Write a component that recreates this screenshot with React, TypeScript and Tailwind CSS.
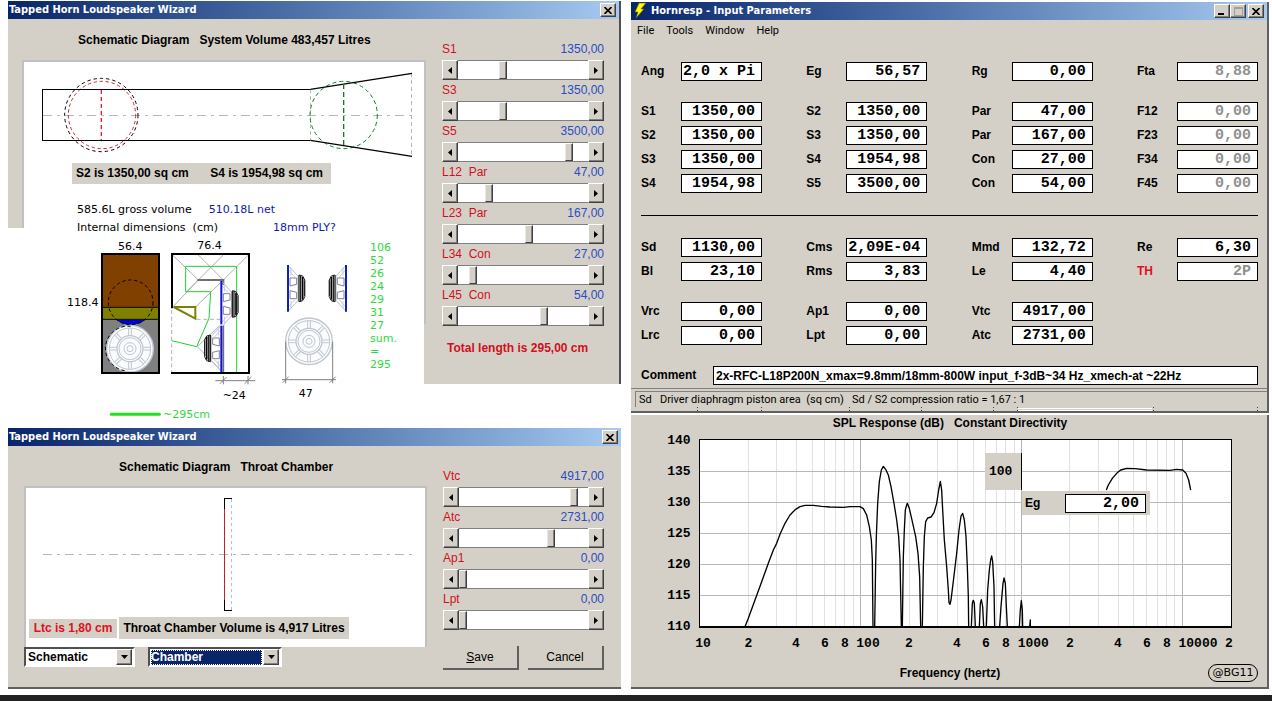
import React from "react";

const sans = "font-['Liberation_Sans',sans-serif]";
const boldText = "font-['Liberation_Sans',sans-serif] text-[12px] leading-[15px] font-bold";
const bevel =
  "bg-[#d4d0c8] border border-t-white border-l-white border-b-[#404040] border-r-[#404040] shadow-[inset_-1px_-1px_0_#808080]";

function CloseButton() {
  return (
    <button type="button" aria-label="Close" className={`flex h-[14px] w-[16px] items-center justify-center ${bevel}`}>
      <svg width="8" height="7" viewBox="0 0 8 7" stroke="#000" strokeWidth="1.6">
        <path d="M0.5 0L7.5 7M7.5 0L0.5 7" />
      </svg>
    </button>
  );
}

function TitleBar({ title, icon, children }: { title: string; icon?: React.ReactNode; children: React.ReactNode }) {
  return (
    <header className="flex h-[18px] items-center bg-gradient-to-r from-[#0a246a] to-[#a6caf0] pr-[3px]">
      {icon}
      <h1 className="flex-1 pl-px font-['DejaVu_Sans_Condensed','DejaVu_Sans',sans-serif] text-[11px] font-bold leading-[18px] text-white">
        {title}
      </h1>
      {children}
    </header>
  );
}

type SliderData = { label: string; value: string; pos: number };

function ArrowButton({ dir, name }: { dir: "left" | "right"; name: string }) {
  return (
    <button type="button" aria-label={name} className={`flex h-5 w-4 shrink-0 items-center justify-center ${bevel}`}>
      <svg width="4" height="7" viewBox="0 0 4 7">
        <path d={dir === "left" ? "M4 0V7L0 3.5Z" : "M0 0V7L4 3.5Z"} />
      </svg>
    </button>
  );
}

function ScrollSlider({ label, value, pos }: SliderData) {
  const id = `slider-${label.replace(/\s+/g, "-")}`;
  return (
    <div>
      <div className={`flex justify-between text-[12px] leading-[21px] ${sans}`}>
        <label htmlFor={id} className="whitespace-pre text-[#d01020]">
          {label}
        </label>
        <output htmlFor={id} className="text-[#2a4cc0]">
          {value}
        </output>
      </div>
      <div className="flex h-5">
        <ArrowButton dir="left" name={`Decrease ${label}`} />
        <input
          id={id}
          type="range"
          min={0}
          max={100}
          defaultValue={pos}
          className="m-0 h-5 min-w-0 flex-1 appearance-none border-y border-[#808080] bg-white [&::-webkit-slider-thumb]:h-[18px] [&::-webkit-slider-thumb]:w-2 [&::-webkit-slider-thumb]:appearance-none [&::-webkit-slider-thumb]:rounded-none [&::-webkit-slider-thumb]:border [&::-webkit-slider-thumb]:border-b-[#404040] [&::-webkit-slider-thumb]:border-l-[#e8e8e8] [&::-webkit-slider-thumb]:border-r-[#404040] [&::-webkit-slider-thumb]:border-t-white [&::-webkit-slider-thumb]:bg-[#d4d0c8] [&::-webkit-slider-thumb]:shadow-[inset_-1px_0_0_#808080]"
        />
        <ArrowButton dir="right" name={`Increase ${label}`} />
      </div>
    </div>
  );
}

/* Units of all drawings are thirds of a pixel. */
function HornProfile() {
  return (
    <svg width="401" height="101" viewBox="72 186 1203 303" fill="none" strokeWidth="3" className="block">
      <g stroke="#b8b8b8" shapeRendering="crispEdges">
        <path d="M128 346H1236" strokeDasharray="27 15 9 15" />
        <path d="M931 268V421M1235 220V468" strokeDasharray="12 9" />
      </g>
      <circle cx="304" cy="345" r="110" stroke="#000" strokeDasharray="10 9" />
      <circle cx="306" cy="345" r="101" stroke="#e02030" strokeDasharray="10 8" />
      <circle cx="1031" cy="345" r="101" stroke="#107a28" strokeDasharray="12 9" />
      <path d="M931 268H128V421H931" stroke="#000" shapeRendering="crispEdges" />
      <path d="M931 268L1236 220M931 421L1236 469" stroke="#000" strokeWidth="4" />
      <path d="M304 270V420" stroke="#e02030" strokeWidth="4" strokeDasharray="12 9" />
      <path d="M1031 252V440" stroke="#107a28" strokeWidth="4" strokeDasharray="15 9" />
    </svg>
  );
}

function DriverFront({ cx, cy }: { cx: number; cy: number }) {
  return (
    <g transform={`translate(${cx} ${cy})`} fill="none" stroke="#c0c6d0" strokeWidth="3">
      <circle r="70" fill="#fbfcfe" strokeWidth="4" />
      <circle r="62" />
      <circle r="39" strokeWidth="4" />
      <circle r="33" />
      <circle r="18" />
      <circle r="9" />
      {[0, 45, 90, 135, 180, 225, 270, 315].map((a) => (
        <path key={a} d="M40 -4H62M40 4H62" transform={`rotate(${a})`} />
      ))}
    </g>
  );
}

function DriverSide({ x, y, flip, bar = true }: { x: number; y: number; flip?: boolean; bar?: boolean }) {
  return (
    <g transform={`translate(${x} ${y}) scale(${flip ? -1 : 1} 1)`} fill="none" strokeWidth="3">
      <path d="M3 -66L30 -36V36L3 66" stroke="#b8bcd0" />
      <path d="M3 -54L20 -34M3 54L20 34M9 -62V-38M9 62V38" stroke="#c4cce0" />
      <path d="M6 -31H26V-12L6 -7ZM6 31H26V12L6 7Z" stroke="#80848c" />
      <path d="M33 -40V40M38 -40V40" stroke="#222" strokeWidth="4" />
      <path d="M44 -34V34" stroke="#000" strokeWidth="5" />
      <path d="M50 -24V24" stroke="#222" strokeWidth="4" />
      <path d="M33 -40L44 -37L51 -24M33 40L44 37L51 24" stroke="#222" />
      {bar && <path d="M0 -70V70" stroke="#1020b0" strokeWidth="6" />}
    </g>
  );
}

function CabinetDrawing() {
  return (
    <svg
      width="342"
      height="190"
      viewBox="-108 129 1026 570"
      fill="none"
      strokeWidth="3"
      className="block shrink-0 font-['DejaVu_Sans',sans-serif]"
    >
      {/* front view */}
      <rect x="126" y="177" width="171" height="160" fill="#804000" />
      <rect x="126" y="337" width="171" height="36" fill="#808000" />
      <rect x="126" y="373" width="171" height="161" fill="#808080" />
      <path d="M171 375H255Q240 389 212 389T171 375Z" fill="#0000d0" />
      <path d="M126 337H297M126 373H297" stroke="#000" />
      <circle cx="212" cy="322" r="67" stroke="#000" strokeDasharray="10 8" />
      <DriverFront cx={210} cy={461} />
      <path d="M212 394A67 67 0 0 0 195 527" stroke="#000" strokeDasharray="10 8" />
      <rect x="126" y="177" width="171" height="357" stroke="#000" strokeWidth="6" />

      {/* section */}
      <g stroke="#b0b0b0">
        <path d="M338 180L415 255M415 180L490 255M490 180L380 290M565 180L490 255M415 255L340 334M490 255L407 336M412 455L486 385M412 455L486 530" />
        <path d="M410 373H480M335 345V530" strokeDasharray="12 8" />
      </g>
      <path d="M335 437L410 455L447 370L452 290H377V214H530V532" stroke="#20d030" />
      <path d="M412 255H490V270" stroke="#707070" strokeWidth="6" />
      <path d="M490 390V533" stroke="#707070" strokeWidth="5" />
      <DriverSide x={484} y={327} bar={false} />
      <DriverSide x={484} y={460} flip bar={false} />
      <path d="M484 258V533" stroke="#1010e0" strokeWidth="6" />
      <path d="M478 390H490" stroke="#fff" strokeWidth="4" />
      <path d="M341 336H406V371Z" stroke="#808000" strokeWidth="6" />
      <path d="M336 340V177H567V534H333" stroke="#000" strokeWidth="6" />

      {/* drivers */}
      <DriverSide x={684} y={280} />
      <DriverSide x={858} y={280} flip />
      <DriverFront cx={747} cy={439} />

      {/* dimension lines */}
      <g stroke="#808080">
        <path d="M466 557H586M490 543V568M564 543V568M480 566L500 546M554 566L574 546" />
        <path d="M677 440V565M818 440V565M666 554H828M668 563L686 545M809 563L827 545" />
      </g>
      <path d="M154 658H298" stroke="#20e020" strokeWidth="9" strokeLinecap="round" />

      <g fill="#000" fontSize="33">
        <text x="174" y="165">56.4</text>
        <text x="412" y="162">76.4</text>
        <text x="21" y="333">118.4</text>
        <text x="488" y="612">~24</text>
        <text x="716" y="606">47</text>
        <text x="309" y="669" fill="#30d840">
          ~295cm
        </text>
      </g>
    </svg>
  );
}

function ChamberDrawing() {
  return (
    <svg width="401" height="129" viewBox="75 204 1203 387" fill="none" strokeWidth="3" className="block" shapeRendering="crispEdges">
      <path d="M126 403H1236" stroke="#b8b8b8" strokeDasharray="27 15 9 15" />
      <path d="M691 236V571" stroke="#a0c8d8" strokeDasharray="10 8" />
      <path d="M692 236H670V571H692" stroke="#000" />
      <path d="M670 267V540" stroke="#c02030" />
    </svg>
  );
}

const hornSliders: SliderData[] = [
  { label: "S1", value: "1350,00", pos: 34 },
  { label: "S3", value: "1350,00", pos: 34 },
  { label: "S5", value: "3500,00", pos: 88 },
  { label: "L12  Par", value: "47,00", pos: 22 },
  { label: "L23  Par", value: "167,00", pos: 55 },
  { label: "L34  Con", value: "27,00", pos: 9 },
  { label: "L45  Con", value: "54,00", pos: 67 },
];

const chamberSliders: SliderData[] = [
  { label: "Vtc", value: "4917,00", pos: 92 },
  { label: "Atc", value: "2731,00", pos: 73 },
  { label: "Ap1", value: "0,00", pos: 0 },
  { label: "Lpt", value: "0,00", pos: 0 },
];

const lengths = ["106", "52", "26", "24", "29", "31", "27", "sum.", "=", "295"];

function HornWizard() {
  return (
    <section>
      <div className="border-r-2 border-[#505050]">
        <TitleBar title="Tapped Horn Loudspeaker Wizard">
          <CloseButton />
        </TitleBar>
      </div>
      <div className="flex items-start">
        <div className="w-[416px] shrink-0">
          <h2 className={`h-[41px] whitespace-pre bg-[#d4d0c8] pl-[70px] pt-[14px] ${boldText}`}>
            {"Schematic Diagram   System Volume 483,457 Litres"}
          </h2>
          <div className="flex items-start">
            <div className="h-[168px] w-4 border-r-2 border-[#c0c0c0] bg-[#d4d0c8]" />
            <div className="min-w-0 flex-1 border-t-2 border-[#c0c0c0] bg-white">
              <HornProfile />
              <p className={`ml-12 flex h-[21px] w-[259px] items-center justify-between bg-[#d4d0c8] pl-1 pr-2 ${boldText}`}>
                <span>S2 is 1350,00 sq cm</span>
                <span>S4 is 1954,98 sq cm</span>
              </p>
              <div className="pb-px pl-[53px] pt-[17px] font-['DejaVu_Sans',sans-serif] text-[11px] leading-[18px]">
                <p className="flex gap-[17px]">
                  <span>585.6L gross volume</span>
                  <span className="text-[#1020a8]">510.18L net</span>
                </p>
                <p className="flex gap-[55px]">
                  <span className="whitespace-pre">{"Internal dimensions  (cm)"}</span>
                  <span className="text-[#1020a8]">18mm PLY?</span>
                </p>
              </div>
              <div className="flex">
                <CabinetDrawing />
                <ul className="pl-1 pt-[3px] font-['DejaVu_Sans',sans-serif] text-[11px] leading-[13px] text-[#30d840]">
                  {lengths.map((l) => (
                    <li key={l}>{l}</li>
                  ))}
                </ul>
              </div>
            </div>
          </div>
        </div>
        <div className="flex h-[365px] flex-1 border-r-2 border-[#505050] bg-[#d4d0c8]">
          <div className="mt-[41px] h-[264px] w-[2px] bg-[#c0c0c0]" />
          <div className="flex-1 pl-4 pr-[15px] pt-5">
            {hornSliders.map((s) => (
              <ScrollSlider key={s.label} {...s} />
            ))}
            <p className={`pl-[5px] pt-[15px] text-[#d01020] ${boldText}`}>Total length is 295,00 cm</p>
          </div>
        </div>
      </div>
    </section>
  );
}

function ComboBox({ label, value, active }: { label: string; value: string; active?: boolean }) {
  return (
    <div
      className={`relative flex h-5 items-center border-2 border-b-white border-l-[#505050] border-r-white border-t-[#505050] bg-white p-px ${
        active ? "w-[134px]" : "w-[111px]"
      }`}
    >
      <select
        aria-label={label}
        defaultValue={value}
        className={`h-[15px] w-full appearance-none font-['Liberation_Sans',sans-serif] text-[12px] font-bold leading-[13px] ${
          active ? "bg-[#0a246a] text-white outline-1 -outline-offset-1 outline-dotted outline-white" : "bg-white px-px text-black"
        }`}
      >
        <option>{value}</option>
      </select>
      <span className={`pointer-events-none ml-px flex h-4 w-4 shrink-0 items-center justify-center ${bevel}`}>
        <svg width="7" height="4" viewBox="0 0 7 4">
          <path d="M0 0H7L3.5 4Z" />
        </svg>
      </span>
    </div>
  );
}

function PushButton({ children }: { children: React.ReactNode }) {
  return (
    <button type="button" className={`h-6 flex-1 border-b-2 border-r-2 border-[#606060] text-[12px] leading-[15px] ${sans}`}>
      {children}
    </button>
  );
}

function ChamberWizard() {
  return (
    <section className="flex flex-1 flex-col border-b-2 border-[#606060] bg-[#d4d0c8]">
      <TitleBar title="Tapped Horn Loudspeaker Wizard">
        <CloseButton />
      </TitleBar>
      <div className="flex items-start">
        <div className="w-[419px] shrink-0">
          <h2 className={`h-10 whitespace-pre pl-[111px] pt-[14px] ${boldText}`}>
            {"Schematic Diagram   Throat Chamber"}
          </h2>
          <div className="ml-4 border-l-2 border-r-2 border-t-2 border-[#c0c0c0] bg-white pb-2">
            <ChamberDrawing />
            <div className={`flex items-center gap-[2px] pl-[3px] ${boldText}`}>
              <p className="h-[19px] w-[88px] bg-[#d4d0c8] text-center leading-[19px] text-[#e01020]">Ltc is 1,80 cm</p>
              <p className="h-[22px] w-[230px] bg-[#d4d0c8] text-center leading-[22px]">
                Throat Chamber Volume is 4,917 Litres
              </p>
            </div>
          </div>
          <div className="flex gap-[13px] pl-4">
            <ComboBox label="View" value="Schematic" />
            <ComboBox label="Section" value="Chamber" active />
          </div>
        </div>
        <div className="flex-1 pl-4 pr-[17px] pt-5">
          {chamberSliders.map((s) => (
            <ScrollSlider key={s.label} {...s} />
          ))}
          <div className="flex gap-[9px] pt-4">
            <PushButton>
              <u>S</u>ave
            </PushButton>
            <PushButton>Cancel</PushButton>
          </div>
        </div>
      </div>
    </section>
  );
}

type FieldData = { label: string; value: string; dim?: boolean; red?: boolean } | null;

const fieldGroups: FieldData[][][] = [
  [[{ label: "Ang", value: "2,0 x Pi" }, { label: "Eg", value: "56,57" }, { label: "Rg", value: "0,00" }, { label: "Fta", value: "8,88", dim: true }]],
  [
    [{ label: "S1", value: "1350,00" }, { label: "S2", value: "1350,00" }, { label: "Par", value: "47,00" }, { label: "F12", value: "0,00", dim: true }],
    [{ label: "S2", value: "1350,00" }, { label: "S3", value: "1350,00" }, { label: "Par", value: "167,00" }, { label: "F23", value: "0,00", dim: true }],
    [{ label: "S3", value: "1350,00" }, { label: "S4", value: "1954,98" }, { label: "Con", value: "27,00" }, { label: "F34", value: "0,00", dim: true }],
    [{ label: "S4", value: "1954,98" }, { label: "S5", value: "3500,00" }, { label: "Con", value: "54,00" }, { label: "F45", value: "0,00", dim: true }],
  ],
];

const driverGroups: FieldData[][][] = [
  [
    [{ label: "Sd", value: "1130,00" }, { label: "Cms", value: "2,09E-04" }, { label: "Mmd", value: "132,72" }, { label: "Re", value: "6,30" }],
    [{ label: "Bl", value: "23,10" }, { label: "Rms", value: "3,83" }, { label: "Le", value: "4,40" }, { label: "TH", value: "2P", dim: true, red: true }],
  ],
  [
    [{ label: "Vrc", value: "0,00" }, { label: "Ap1", value: "0,00" }, { label: "Vtc", value: "4917,00" }, null],
    [{ label: "Lrc", value: "0,00" }, { label: "Lpt", value: "0,00" }, { label: "Atc", value: "2731,00" }, null],
  ],
];

function NumberBox({ id, value, dim }: { id: string; value: string; dim?: boolean }) {
  return (
    <input
      id={id}
      defaultValue={value}
      className={`h-[19px] w-[81px] border border-black bg-white pr-[6px] text-right font-['Liberation_Mono',monospace] text-[15px] font-bold leading-[17px] ${
        dim ? "text-[#909090]" : "text-black"
      }`}
    />
  );
}

function FieldGroups({ groups, prefix }: { groups: FieldData[][][]; prefix: string }) {
  return (
    <div className="flex flex-col gap-[21px]">
      {groups.map((rows, g) => (
        <div key={g} className="flex flex-col gap-[5px]">
          {rows.map((row, r) => (
            <div key={r} className="flex justify-between">
              {row.map((f, c) => {
                if (!f) return <div key={c} className="w-[121px]" />;
                const id = `${prefix}-${g}-${r}-${c}`;
                return (
                  <div key={c} className="flex w-[121px] items-center justify-between">
                    <label htmlFor={id} className={`${boldText} ${f.red ? "text-[#e01020]" : ""}`}>
                      {f.label}
                    </label>
                    <NumberBox id={id} value={f.value} dim={f.dim} />
                  </div>
                );
              })}
            </div>
          ))}
        </div>
      ))}
    </div>
  );
}

function InputWindow() {
  return (
    <section className="border-b-2 border-r-2 border-[#606060] bg-[#d4d0c8]">
      <TitleBar
        title="Hornresp - Input Parameters"
        icon={
          <svg width="19" height="18" viewBox="0 0 19 18" className="shrink-0">
            <path d="M8 1H15L10 7H13L5 16L7 10H4Z" fill="#ffff00" stroke="#606000" strokeWidth="0.6" />
          </svg>
        }
      >
        <button type="button" aria-label="Minimize" className={`flex h-[14px] w-4 items-end pb-[2px] pl-[3px] ${bevel}`}>
          <span className="h-[2px] w-[6px] bg-black" />
        </button>
        <button type="button" aria-label="Maximize" className={`flex h-[14px] w-4 items-center justify-center ${bevel}`}>
          <span className="h-[9px] w-[9px] border border-t-2 border-[#a0a098]" />
        </button>
        <span className="w-[2px]" />
        <CloseButton />
      </TitleBar>
      <nav className="flex h-[22px] gap-3 pl-[6px] font-['Roboto',sans-serif] text-[11px] leading-[20px]">
        {["File", "Tools", "Window", "Help"].map((m) => (
          <button key={m} type="button">
            {m}
          </button>
        ))}
      </nav>
      <form className="pb-[3px] pl-[10px] pr-[9px] pt-5">
        <FieldGroups groups={fieldGroups} prefix="horn" />
        <hr className="mb-[22px] mt-[22px] border-t border-black" />
        <FieldGroups groups={driverGroups} prefix="driver" />
        <div className="mt-[21px] flex items-center">
          <label htmlFor="comment" className={`w-[72px] ${boldText}`}>
            Comment
          </label>
          <input
            id="comment"
            defaultValue="2x-RFC-L18P200N_xmax=9.8mm/18mm-800W input_f-3dB~34 Hz_xmech-at ~22Hz"
            className={`h-[19px] min-w-0 flex-1 border border-black bg-white px-[2px] ${boldText}`}
          />
        </div>
      </form>
      <div className="border-t border-[#808080] pl-1 pt-[2px]">
        <p className="h-[16px] whitespace-pre border-l border-t border-[#808080] pl-[3px] font-['Roboto',sans-serif] text-[11px] leading-[15px]">
          {"Sd   Driver diaphragm piston area  (sq cm)   Sd / S2 compression ratio = 1,67 : 1"}
        </p>
        <svg width="100%" height="4" className="block" shapeRendering="crispEdges">
          <path d="M62 0v1m0 2v1M126 0v1m0 2v1M214 0v1m0 2v1M286 0v1m0 2v1M358 0v1m0 2v1M382 0v1m0 2v1M518 0v1m0 2v1M622 0v1m0 2v1" stroke="#404040" />
          <path d="M383 1H517M383 3H517" stroke="#fff" />
        </svg>
      </div>
    </section>
  );
}

const decadeX = [209, 692, 1174, 1657];
const minorLines = decadeX.flatMap((x0) =>
  [2, 3, 4, 5, 6, 7, 8, 9].map((n) => x0 + 482.7 * Math.log10(n)).filter((x) => x < 1800),
);
const yLabels = [140, 135, 130, 125, 120, 115, 110];
const xLabels: [string, number][] = [
  ["10", 219], ["2", 355], ["4", 498], ["6", 585], ["8", 645], ["100", 714],
  ["2", 837], ["4", 981], ["6", 1068], ["8", 1128], ["1000", 1210],
  ["2", 1320], ["4", 1464], ["6", 1551], ["8", 1611], ["10000", 1704], ["2", 1797],
];

const response = [
  "M345 650L355 625 375 570 395 515 415 460 430 420 440 400 450 373 465 340 480 315 497 298 510 290 525 286 550 286 575 289 600 291 640 292 660 290 690 290 700 296 710 315 718 350 724 390 727 450 729 650",
  "M734 650L737 460 739 380 743 280 748 215 754 180 760 169 767 178 775 195 783 230 792 280 800 330 806 380 810 450 814 650",
  "M817 650L820 440 823 360 826 300 830 285 832 280 838 295 847 335 857 380 864 430 869 500 872 650",
  "M877 650L880 470 883 380 887 335 893 324 903 321 912 308 920 280 926 240 931 214 935 240 938 300 943 390 950 470 955 540 957 578 960 583 963 570 968 530 974 480 980 430 987 360 993 318 998 310 1003 330 1008 380 1012 470 1015 560 1016 650",
  "M1024 650L1027 580 1030 571 1033 580 1036 650M1048 650L1051 580 1054 569 1058 590 1061 650",
  "M1069 650L1073 540 1078 480 1082 450 1085 438 1088 455 1092 530 1094 650",
  "M1109 650L1113 590 1119 520 1122 504 1126 520 1129 590 1132 650",
  "M1168 650L1171 600 1174 572 1177 600 1178 650M1199 650L1201 630V650",
  "M1429 240L1435 225 1447 205 1460 190 1472 180 1490 175 1515 176 1550 180 1620 181 1640 178 1658 180 1668 190 1676 210 1682 240",
].join("");

function ResponseWindow() {
  return (
    <section className="flex flex-1 flex-col items-center border-b-2 border-r-2 border-[#606060] bg-[#d4d0c8] pl-[2px]">
      <h2 className={`h-[17px] whitespace-pre pt-px ${boldText}`}>{"SPL Response (dB)   Constant Directivity"}</h2>
      <div className="relative w-[580px]">
        <svg width="580" height="223" viewBox="90 66 1740 669" fill="none" strokeWidth="3" className="block">
          <rect x="209" y="89" width="1596" height="562" fill="#fff" />
          <g shapeRendering="crispEdges">
            {minorLines.map((x) => (
              <path key={x} d={`M${x} 90V650`} stroke="#e2e2e2" />
            ))}
            {decadeX.slice(1).map((x) => (
              <path key={x} d={`M${x} 90V650`} stroke="#b4b4b4" />
            ))}
            {[184, 277, 370, 463, 556].map((y) => (
              <path key={y} d={`M210 ${y}H1804`} stroke="#b8b8b8" />
            ))}
          </g>
          <path d={response} stroke="#000" strokeWidth="4" strokeLinejoin="round" />
          <rect x="209" y="89" width="1596" height="562" stroke="#000" strokeWidth="4" shapeRendering="crispEdges" />
          <g fill="#000" fontSize="39" fontWeight="700" className="font-['Liberation_Mono',monospace]">
            {yLabels.map((l, i) => (
              <text key={l} x="182" y={102 + i * 93} textAnchor="end">
                {l}
              </text>
            ))}
            {xLabels.map(([l, x]) => (
              <text key={x} x={x} y="711" textAnchor="middle">
                {l}
              </text>
            ))}
          </g>
        </svg>
        <p className="absolute left-[325px] top-[21px] flex h-[37px] w-[37px] items-center border-r border-black bg-[#d4d0c8] pl-1 font-['Liberation_Mono',monospace] text-[13px] font-bold">
          100
        </p>
        <div className="absolute left-[362px] top-[59px] flex h-6 w-32 items-center justify-between bg-[#d4d0c8] pl-[3px] pr-1">
          <label htmlFor="chart-eg" className={boldText}>
            Eg
          </label>
          <NumberBox id="chart-eg" value="2,00" />
        </div>
      </div>
      <div className="grid w-full grid-cols-[1fr_auto_1fr] items-center px-[9px] pt-[9px]">
        <span />
        <p className={boldText}>Frequency (hertz)</p>
        <span className="flex h-[18px] w-[50px] items-center justify-center justify-self-end rounded-full border border-black font-['DejaVu_Sans',sans-serif] text-[11px]">
          @BG11
        </span>
      </div>
    </section>
  );
}

export default function App() {
  return (
    <div className="flex min-h-screen flex-col bg-white text-black">
      <main className="grid flex-1 grid-cols-[613fr_638fr] gap-[10px] pb-[6px] pl-2 pr-[3px]">
        <div className="flex flex-col pt-px">
          <HornWizard />
          <ChamberWizard />
        </div>
        <div className="flex flex-col gap-[2px] pt-[2px]">
          <InputWindow />
          <ResponseWindow />
        </div>
      </main>
      <footer className="h-[6px] bg-[#222222]" />
    </div>
  );
}
